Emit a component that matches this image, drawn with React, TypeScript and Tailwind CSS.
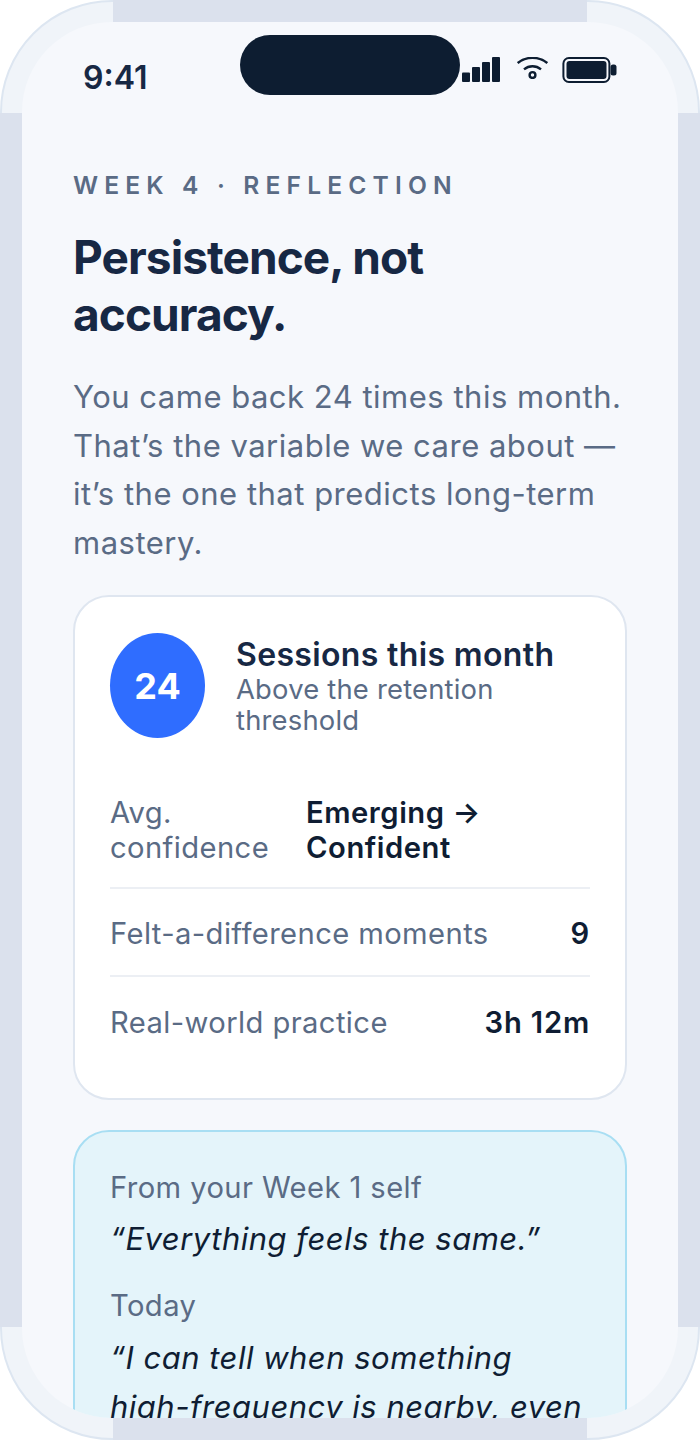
const Row = ({ label, value, last }: { label: string; value: string; last?: boolean }) => (
  <div className={`flex items-center justify-between gap-4 h-[88px] pt-[3px] ${last ? '' : 'border-b-2 border-[#eceff4]'}`}>
    <span className="text-[29.2px] leading-[35px] tracking-[0.4px] text-[#5a6b85]">{label}</span>
    <span className="text-[29.2px] leading-[35px] tracking-[0.8px] font-semibold text-[#0f1d33]">{value}</span>
  </div>
)

export default function App() {
  return (
    <div className="bg-white w-[700px] h-[1440px] font-['Inter',sans-serif] [font-optical-sizing:none]">
      <div className="relative w-full h-full rounded-[112px] border-2 border-[#dde6f1] bg-[#f0f4f9] p-5">
        {/* frame bars */}
        <div className="absolute -top-0.5 left-[111px] right-[111px] h-[22px] bg-[#dbe1ed]" />
        <div className="absolute -bottom-0.5 left-[111px] right-[111px] h-[22px] bg-[#dbe1ed]" />
        <div className="absolute -left-0.5 top-[111px] bottom-[111px] w-[22px] bg-[#dbe1ed]" />
        <div className="absolute -right-0.5 top-[111px] bottom-[111px] w-[22px] bg-[#dbe1ed]" />

        <div className="relative h-full rounded-[90px] bg-[#f6f8fc] overflow-hidden">
          <div className="absolute left-[218px] top-[13px] w-[220px] h-[60px] rounded-full bg-[#0d1d31]" />

          <div className="flex items-start justify-between pl-[61px] pr-[61px] pt-[35px] h-[114px]">
            <span className="mt-px text-[32px] leading-[40px] font-semibold text-[#172844]">9:41</span>
            <div className="flex items-start">
              <svg width="38" height="25" viewBox="0 0 38 25" fill="#0d1d31">
                <rect x="0" y="15.5" width="8" height="9.5" rx="1" />
                <rect x="10" y="10" width="8" height="15" rx="1" />
                <rect x="20" y="5" width="8" height="20" rx="1" />
                <rect x="30" y="0" width="8" height="25" rx="1" />
              </svg>
              <svg width="31" height="22" viewBox="0 0 31 22" fill="none" stroke="#0d1d31" strokeWidth="2.4" className="ml-[17px]">
                <path d="M0.7 6C9 -0.9 22 -0.9 30.3 6" />
                <path d="M7 12.4C12 8.2 19 8.2 24 12.4" />
                <circle cx="15.5" cy="18" r="2.9" />
              </svg>
              <svg width="55" height="26" viewBox="0 0 55 26" fill="none" className="ml-[14px]">
                <rect x="1.4" y="1" width="46" height="24" rx="5.5" stroke="#0d1d31" strokeWidth="2" />
                <rect x="4.5" y="4" width="40" height="18" rx="3" fill="#0d1d31" />
                <rect x="48.5" y="7.5" width="6" height="11" rx="2.5" fill="#0d1d31" />
              </svg>
            </div>
          </div>

          <div className="px-[51px] pt-[33px]">
            <p className="text-[24.6px] leading-[32px] font-semibold tracking-[0.25em] text-[#5a6b85]">WEEK 4 · REFLECTION</p>
            <h1 className="mt-[28px] text-[46px] leading-[57px] font-bold tracking-[-0.02em] text-[#172844]">Persistence, not accuracy.</h1>
            <p className="mt-[30px] text-[31px] leading-[48.6px] tracking-[0.5px] text-[#5a6b85]">
              You came back 24 times this month. That’s the variable we care about — it’s the one that predicts long-term mastery.
            </p>

            <div className="mt-[28px] rounded-[36px] border-2 border-[#dfe6f0] bg-white px-[35px] pt-[36px] pb-[33px]">
              <div className="flex items-center gap-[31px]">
                <div className="flex w-[95px] h-[105px] shrink-0 items-center justify-center rounded-[50%] bg-[#2f6dff] text-[36px] font-bold text-white">24</div>
                <div>
                  <p className="text-[32px] leading-[39px] tracking-[0.35px] font-semibold text-[#172844]">Sessions this month</p>
                  <p className="text-[27.4px] leading-[31px] tracking-[0.2px] text-[#5a6b85]">Above the retention threshold</p>
                </div>
              </div>
              <div className="mt-[57px]">
                <div className="flex items-start justify-between pb-[22px] border-b-2 border-[#eceff4]">
                  <span className="w-[180px] text-[29.2px] leading-[35px] tracking-[0.4px] text-[#5a6b85]">Avg. confidence</span>
                  <span className="w-[284px] text-[29.2px] leading-[35px] tracking-[0.55px] font-semibold text-[#0f1d33]">Emerging → Confident</span>
                </div>
                <Row label="Felt-a-difference moments" value="9" />
                <Row label="Real-world practice" value="3h 12m" last />
              </div>
            </div>

            <div className="mt-[30px] rounded-[36px] border-2 border-[#a8def3] bg-[#e4f4fa] px-[35px] pt-[38px] pb-[32px]">
              <p className="text-[29.2px] leading-[35px] tracking-[0.4px] text-[#5a6b85]">From your Week 1 self</p>
              <p className="mt-[12px] text-[31px] leading-[44px] tracking-[0.5px] italic text-[#0f1d33]">“Everything feels the same.”</p>
              <p className="mt-[27px] text-[29.2px] leading-[35px] tracking-[0.4px] text-[#5a6b85]">Today</p>
              <p className="mt-[10px] text-[31px] leading-[49px] tracking-[0.5px] italic text-[#0f1d33]">“I can tell when something high-frequency is nearby, even when it’s quiet.”</p>
            </div>
          </div>
        </div>
      </div>
    </div>
  )
}
